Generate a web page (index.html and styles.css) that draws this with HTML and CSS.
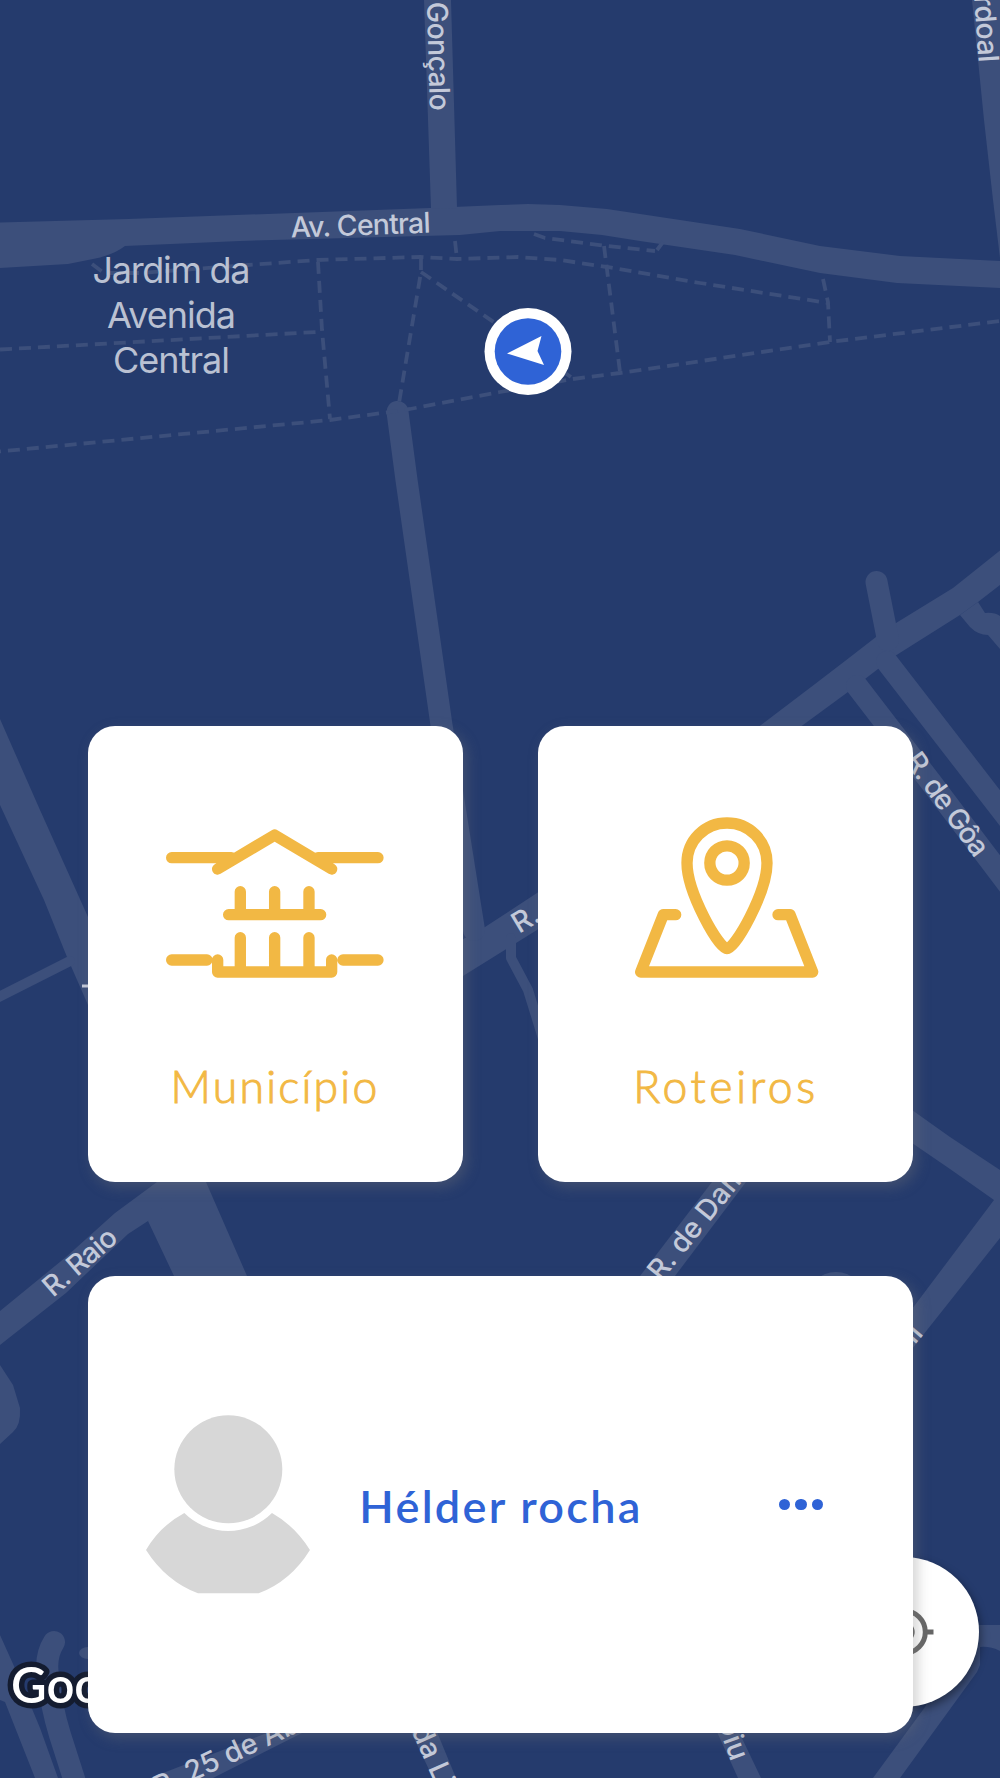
FILE: index.html
```html
<!DOCTYPE html>
<html lang="pt">
<head>
    <meta charset="UTF-8">
    <title>Município</title>
    <link rel="stylesheet" href="styles.css">
</head>
<body>

<div class="screen">
    <svg class="map" viewBox="0 0 1000 1778" aria-hidden="true">
        <!-- roads -->
        <g class="area">
            <path d="M0 222.500L128 219L430 208L500 205L528 204L560 205L607 209L700 223L740 229L820 246L900 256L1000 261V288L897 283L820 273L735 255L640 241L602 235L560 231L500 231L460 235L240 241L125 246Q112 256 88 260L68 264L0 268Z"/>
            <path d="M424 0H451L457 208L431 209Z"/>
            <path d="M972 0H1000V258L993 200L984 120L979 70Z"/>
            <path d="M1000 550.500L953 588L896 623L876 637L845 661L815 684L761 725L537 893L485 927L440 952V992L463 976L537 930L803 725L848 692L878 669L895 656L960 615L978 602L1000 585Z"/>
            <path d="M960 615L970 627Q978 635 988 635L1000 649V616Q994 612 985 613L978 602Z"/>
            <path d="M0 719L40 810L88 917L206 1182L247 1276L174 1276L148 1221L157 1182L88 1005L67 957L44 900L0 805Z"/>
            <path d="M157 1182L115 1213L66 1257L0 1311V1345L66 1293L128 1234L148 1221L190 1182Z"/>
            <path d="M0 1365L13 1385L20 1408Q21 1425 13 1432L0 1444Z"/>
            <path d="M712 1182H746L675 1276H640Z"/>
            <path d="M912 1110L950 1137L1000 1170V1238L912 1349V1309L994 1200L950 1169L912 1143Z"/>
            <circle cx="836" cy="1302" r="30"/>
            <path d="M0 1635L18 1675L40 1728L58 1778H35L5 1702L0 1700Z"/>
            <ellipse cx="88" cy="1653" rx="9" ry="6"/>
            <path d="M150 1778L267 1733H302L213 1778Z"/>
            <path d="M411 1732H437L456 1778H433Z"/>
            <path d="M717 1732H739L761 1778H738Z"/>
            <path d="M873 1778L925 1707L970 1625H1000V1651Q990 1646 980 1647V1665L977 1672L900 1778Z"/>
        </g>
        <g class="road">
            <path d="M397.500 412L406.500 480L441.500 725L474 930"/>
            <path d="M876.500 582L888 640"/>
            <path d="M857 686L930 781L1020 900"/>
            <path d="M887 662L1020 834"/>
            <path d="M54 1642Q45 1656 48 1675Q51 1706 60 1735L76 1785"/>
            <path class="lane" d="M-5 999L70 961"/>
            <path class="lane" d="M511 938V958L528 990L545 1045"/>
        </g>

        <!-- footpaths -->
        <g class="paths">
            <path d="M92 264L104 273L140 273L248 265L317 260L420 257L457 259L518 257L560 260L607 267L700 283L828 303"/>
            <path d="M318 262L322 330L330 419"/>
            <path d="M0 349.500L316 332"/>
            <path d="M-11 452.500L330 420L390 412L410 409L500 392L573 379L620 373L830 342L1000 321"/>
            <path d="M455 241L457 259"/>
            <path d="M421 258V272L399 403"/>
            <path d="M421 272L495 323L575 380"/>
            <path d="M534 234L545 238L607 246L655 251"/>
            <path d="M657 250L663 242"/>
            <path d="M604 246L620 372"/>
            <path d="M823 279L828 302L830 342"/>
        </g>

        <!-- names -->
        <g class="names">
            <text transform="translate(427 2) rotate(88.500)" textLength="109">Gonçalo</text>
            <text transform="translate(974 -4) rotate(86)" textLength="67">rdoal</text>
            <text transform="translate(291 237.500) rotate(-2)" textLength="140">Av. Central</text>
            <text transform="translate(904 761) rotate(54)" textLength="121">R. de Gôa</text>
            <text transform="translate(519 934) rotate(-31)">R. Dr</text>
            <text transform="translate(53 1298) rotate(-41)" textLength="88">R. Raio</text>
            <text transform="translate(661 1282) rotate(-51)">R. de Dam</text>
            <text transform="translate(924 1334) rotate(-50)" text-anchor="end">il</text>
            <text transform="translate(159 1797) rotate(-25)">R. 25 de Abril</text>
            <text transform="translate(411 1730) rotate(66)">da Li</text>
            <text transform="translate(731 1762) rotate(70)" text-anchor="end">Diu</text>
            <path d="M82 986H90" class="tick"/>
        </g>
        <g class="park">
            <text x="171.500" y="283" textLength="158">Jardim da</text>
            <text x="171.500" y="328" textLength="129">Avenida</text>
            <text x="171.500" y="373" textLength="117">Central</text>
        </g>
        <text class="google" x="11" y="1703">Google</text>

        <!-- current position -->
        <circle cx="528" cy="351.500" r="43.500" fill="#fff"/>
        <circle cx="528" cy="351.500" r="33.300" fill="#2f63d6"/>
        <path d="M507 353.500L541.500 336L537.500 351L544 365Z" fill="#fff"/>
    </svg>

    <button class="locate" type="button" aria-label="Localização">
        <svg viewBox="-30 -30 60 60" width="60" height="60">
            <circle r="21.300" fill="none" stroke="#666" stroke-width="5"/>
            <circle r="10.700" fill="#666"/>
            <path d="M-29.500 0H-22M22 0H29.500M0 -29.500V-22M0 22V29.500" stroke="#666" stroke-width="5"/>
        </svg>
    </button>

    <div class="menu">
        <div class="row">
            <a class="card">
                <span class="icon">
                    <svg viewBox="259 147 652 447" width="217.300" height="149">
                        <path d="M276 233H455M715 233H895M414 267L585 165L756 267M447 404H723M482 335V404M585 335V404M688 335V404M482 473V576M585 473V576M688 473V576M414 540V576H756V540M276 540H382M790 540H895"/>
                    </svg>
                </span>
                <span class="label">Município</span>
            </a>
            <a class="card">
                <span class="icon icon-map">
                    <svg viewBox="345 111 551 483" width="183.700" height="161">
                        <circle cx="621" cy="249" r="51.500"/>
                        <path d="M621 129C554 129 501 182 501 249C501 338 597 506 621 506S741 338 741 249C741 182 688 129 621 129Z"/>
                        <path d="M467 404H430L362 576H878L810 404H774"/>
                    </svg>
                </span>
                <span class="label label-wide">Roteiros</span>
            </a>
        </div>

        <div class="card user">
            <svg class="avatar" viewBox="438 105 493 536">
                <circle cx="685" cy="268" r="162"/>
                <path d="M553 399Q480 438 438 510Q498 604 594 640H776Q872 604 930 510Q885 438 816 399A187 187 0 0 1 553 399Z"/>
            </svg>
            <span class="name">Hélder rocha</span>
            <span class="more"><i></i><i></i><i></i></span>
        </div>
    </div>
</div>

</body>
</html>
```
FILE: styles.css
```css
*{
    padding: 0;
    margin: 0;
    box-sizing: border-box;
}
body {
    background-color: #253b6d;
    font-family: Lato, "Liberation Sans", sans-serif;
}

.screen{
    position: relative;
    width: 1000px;
    height: 1778px;
    overflow: hidden;
}

/* map */
.map{
    position: absolute;
    top: 0;
    left: 0;
    width: 1000px;
    height: 1778px;
}

.area{
    fill: #3c4f7b;
}

.road{
    fill: none;
    stroke: #3c4f7b;
    stroke-width: 22;
    stroke-linecap: round;
    stroke-linejoin: round;
}

.road .lane{
    stroke-width: 10;
}

.paths{
    fill: none;
    stroke: #3c4f7b;
    stroke-width: 3.8;
    stroke-dasharray: 12 7;
}

.names{
    font-family: Inter, Roboto, sans-serif;
    font-size: 28.5px;
    font-weight: 500;
    fill: #c3c9d9;
}

.tick{
    stroke: #c3c9d9;
    stroke-width: 3;
}

.park{
    font-family: Inter, Roboto, sans-serif;
    font-size: 36px;
    fill: #bac1d2;
    text-anchor: middle;
}

.google{
    font-size: 49px;
    font-weight: 600;
    fill: #fff;
    stroke: #141c30;
    stroke-width: 11;
    stroke-linejoin: round;
    paint-order: stroke;
}

.locate{
    position: absolute;
    left: 829px;
    top: 1557px;
    width: 150px;
    height: 150px;
    display: flex;
    align-items: center;
    justify-content: center;
    border: 0;
    border-radius: 50%;
    background-color: #fff;
    box-shadow: 2px 4px 8px rgba(0, 0, 0, 0.4);
}

/* cards */
.menu{
    position: relative;
    padding: 725.6px 87.5px 0;
    display: flex;
    flex-direction: column;
    gap: 94px;
}

.row{
    display: flex;
    gap: 75px;
}

.card{
    flex: 1;
    height: 456.5px;
    padding-top: 91.5px;
    display: flex;
    flex-direction: column;
    align-items: center;
    background-color: #fff;
    border-radius: 27px;
    box-shadow: 4px 5px 14px rgba(120, 120, 120, 0.35);
}

.icon{
    height: 161px;
    display: flex;
    align-items: flex-end;
    fill: none;
    stroke: #f2b844;
    stroke-width: 34;
    stroke-linecap: round;
    stroke-linejoin: round;
}

.icon-map{
    padding-left: 4px;
}

.label{
    margin-top: 78px;
    color: #f2b844;
    font-size: 44.5px;
    font-weight: 300;
    line-height: 60px;
    letter-spacing: 2.2px;
    -webkit-text-stroke: 1px #f2b844;
}

.label-wide{
    letter-spacing: 3.6px;
    padding-left: 2px;
}

.user{
    flex: none;
    flex-direction: row;
    padding: 0 89.500px 0 58.500px;
}

.avatar{
    width: 164.300px;
    height: 178.700px;
    fill: #d7d7d7;
}

.name{
    margin-left: 49px;
    margin-top: 4px;
    color: #2f63d6;
    font-size: 45px;
    font-weight: 600;
    letter-spacing: 2.3px;
}

.more{
    margin-left: auto;
    display: flex;
    gap: 5px;
}

.more i{
    width: 11.300px;
    height: 11.300px;
    border-radius: 50%;
    background-color: #2f63d6;
}
```
